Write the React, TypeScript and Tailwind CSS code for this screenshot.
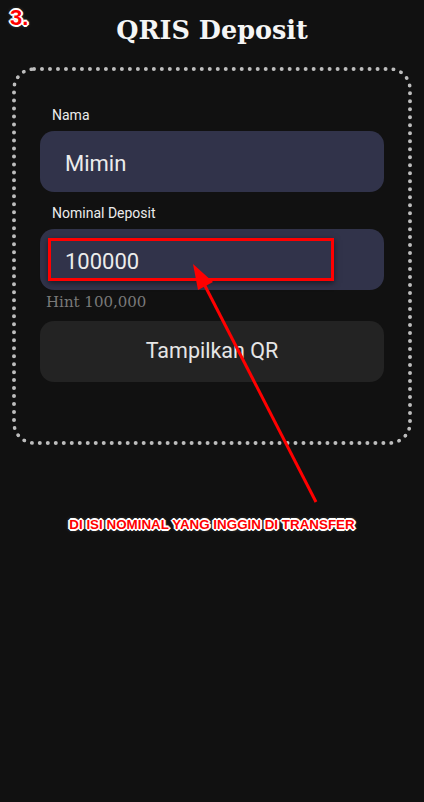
export default function App() {
  const outline =
    '1px 1px 0 #fff, -1px -1px 0 #fff, 1px -1px 0 #fff, -1px 1px 0 #fff, 0 2px 0 #fff, 0 -2px 0 #fff, 2px 0 0 #fff, -2px 0 0 #fff, 0 0 4px rgba(255,255,255,0.6)'

  return (
    <div className="relative min-h-[802px] w-full bg-[#111111] font-['Roboto',sans-serif]">
      {/* nomor langkah */}
      <div
        className="absolute left-[10px] top-[5px] font-['Liberation_Sans',sans-serif] text-[22px] font-bold leading-[26px] text-[#ff0000]"
        style={{ textShadow: outline }}
      >
        3.
      </div>

      <h1 className="pt-[12px] text-center font-['DejaVu_Serif',serif] text-[25.5px] font-bold leading-[36px] text-[#f5f5f5]">
        QRIS Deposit
      </h1>

      <div className="mx-[12px] mt-[19px] rounded-[22px] border-4 border-dotted border-[#bdbdbd] px-[24px] pb-[59px] pt-[34px]">
        <div className="ml-[12px] text-[14px] leading-[20px] text-[#ececec]">Nama</div>
        <div className="mt-[6px] flex h-[61px] items-center rounded-[14px] bg-[#31334a] pl-[25px] pt-[4px] text-[22px] text-[#ececec]">
          Mimin
        </div>

        <div className="ml-[12px] mt-[11px] text-[14px] leading-[20px] text-[#ececec]">Nominal Deposit</div>
        <div className="relative mt-[6px] flex h-[61px] items-center rounded-[14px] bg-[#31334a] pl-[25px] pt-[4px] text-[22px] text-[#ececec]">
          100000
          <div className="absolute left-[8px] top-[9px] h-[43px] w-[286px] border-[3px] border-[#ff0000] shadow-[0_2px_6px_rgba(0,0,0,0.5)]" />
        </div>
        <div className="ml-[6px] mt-[2px] font-['DejaVu_Serif',serif] text-[15px] leading-[20px] text-[#7a7a7a]">
          Hint 100,000
        </div>

        <button className="mt-[9px] flex h-[61px] w-full items-center justify-center rounded-[14px] bg-[#232323] text-[21.5px] text-[#e6e6e6]">
          Tampilkan QR
        </button>
      </div>

      <div
        className="mt-[72px] text-center font-['Liberation_Sans',sans-serif] text-[13.4px] font-bold leading-[16px] text-[#ff0000]"
        style={{ textShadow: outline }}
      >
        DI ISI NOMINAL YANG INGGIN DI TRANSFER
      </div>

      {/* panah anotasi */}
      <svg className="pointer-events-none absolute left-0 top-0" width="424" height="802">
        <line x1="316" y1="502" x2="202" y2="280" stroke="#ff0000" strokeWidth="3" />
        <polygon points="193,264 213,282 198,290" fill="#ff0000" />
      </svg>
    </div>
  )
}
